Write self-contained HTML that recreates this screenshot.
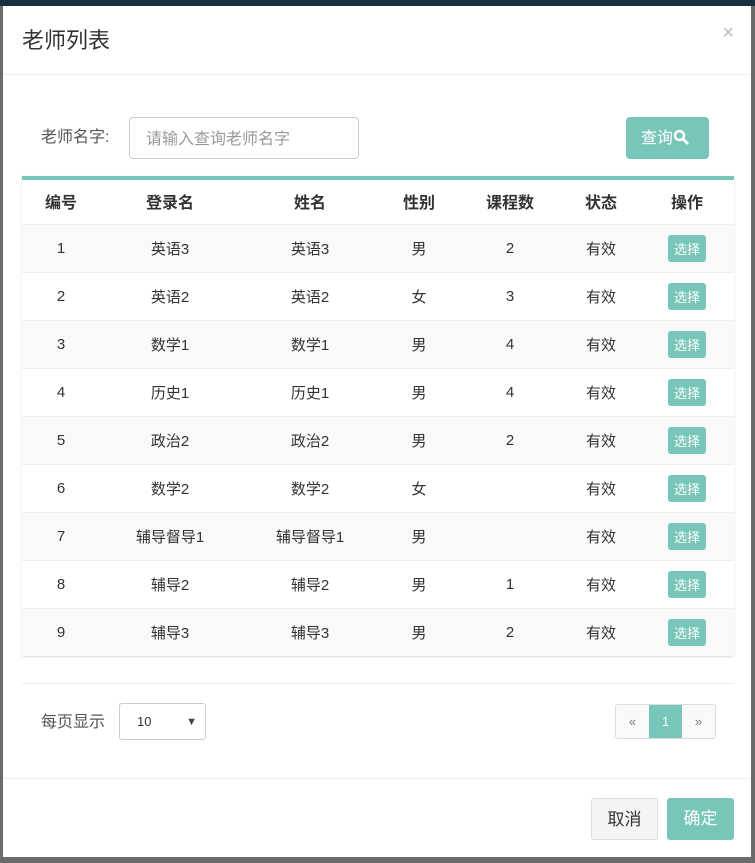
<!DOCTYPE html><html><head><meta charset="utf-8"><style>
*{box-sizing:border-box;margin:0;padding:0}
body{width:755px;height:863px;background:#6b6b6b;position:relative;overflow:hidden;font-family:"Liberation Sans","Noto Sans CJK SC",sans-serif;color:#333}
.top{position:absolute;left:0;top:0;width:755px;height:6px;background:#17303f}
.m{position:absolute;left:3px;top:6px;width:748px;height:851px;background:#fff}
.t{position:absolute;left:19px;top:17px;font-size:22px;color:#333}
.x{position:absolute;right:17px;top:16px;font-size:20px;color:#bbb}
.hr{position:absolute;height:1px;background:#eee}
.lab{position:absolute;left:38px;top:117px;font-size:16px;color:#555}
.inp{position:absolute;left:126px;top:111px;width:230px;height:42px;border:1px solid #ccc;border-radius:4px;font-size:16px;color:#999;padding:7px 16px}
.q{position:absolute;left:623px;top:111px;width:83px;height:42px;background:#78c6b9;border-radius:4px;color:#fff;font-size:16px;padding:7px 0 0 15px}
table{position:absolute;left:19px;top:170px;width:712px;border-collapse:collapse;border-top:4px solid #78c6b9;box-shadow:0 1px 2px rgba(0,0,0,.15);border-radius:3px}
th{height:46px;font-size:16px;font-weight:bold;text-align:center;padding-bottom:2px}
td{height:48px;text-align:center;font-size:15px;border-top:1px solid #eee}
tr:nth-child(even) td{background:#f9f9f9}
.b{display:inline-block;background:#78c6b9;color:#fff;font-size:13px;padding:4px 6px;border-radius:3px}
.sel{position:absolute;left:116px;top:697px;width:87px;height:37px;border:1px solid #ccc;border-radius:3px;font-size:13px;padding:10px 17px}
.pg{position:absolute;left:612px;top:698px;height:35px;border:1px solid #ddd;border-radius:3px;display:flex;font-size:13px;overflow:hidden}
.pg span{display:block;width:33px;text-align:center;line-height:33px;background:#f9f9f9;color:#777}
.btn{position:absolute;top:792px;height:42px;border-radius:3px;font-size:17px;padding:6px 0;text-align:center;width:67px}
</style></head><body>
<div class="top"></div>
<div class="m">
<div class="t">老师列表</div><div class="x">×</div>
<div class="hr" style="left:0;top:68px;width:748px"></div>
<div class="lab">老师名字:</div>
<div class="inp">请输入查询老师名字</div>
<div class="q">查询<svg width="16" height="16" viewBox="0 0 16 16" style="vertical-align:-2px"><circle cx="6.5" cy="6.5" r="4.5" fill="none" stroke="#fff" stroke-width="2.4"/><path d="M10 10l4 4" stroke="#fff" stroke-width="3" stroke-linecap="round"/></svg></div>
<table>
<tr><th style="width:78px">编号</th><th style="width:140px">登录名</th><th style="width:140px">姓名</th><th style="width:78px">性别</th><th style="width:104px">课程数</th><th style="width:78px">状态</th><th>操作</th></tr>
<tr><td>1</td><td>英语3</td><td>英语3</td><td>男</td><td>2</td><td>有效</td><td><span class="b">选择</span></td></tr>
<tr><td>2</td><td>英语2</td><td>英语2</td><td>女</td><td>3</td><td>有效</td><td><span class="b">选择</span></td></tr>
<tr><td>3</td><td>数学1</td><td>数学1</td><td>男</td><td>4</td><td>有效</td><td><span class="b">选择</span></td></tr>
<tr><td>4</td><td>历史1</td><td>历史1</td><td>男</td><td>4</td><td>有效</td><td><span class="b">选择</span></td></tr>
<tr><td>5</td><td>政治2</td><td>政治2</td><td>男</td><td>2</td><td>有效</td><td><span class="b">选择</span></td></tr>
<tr><td>6</td><td>数学2</td><td>数学2</td><td>女</td><td></td><td>有效</td><td><span class="b">选择</span></td></tr>
<tr><td>7</td><td>辅导督导1</td><td>辅导督导1</td><td>男</td><td></td><td>有效</td><td><span class="b">选择</span></td></tr>
<tr><td>8</td><td>辅导2</td><td>辅导2</td><td>男</td><td>1</td><td>有效</td><td><span class="b">选择</span></td></tr>
<tr><td>9</td><td>辅导3</td><td>辅导3</td><td>男</td><td>2</td><td>有效</td><td><span class="b">选择</span></td></tr>
</table>
<div class="hr" style="left:19px;top:677px;width:712px"></div>
<div class="lab" style="top:702px">每页显示</div>
<div class="sel">10<span style="position:absolute;right:8px;top:12px;font-size:11px;color:#444">▼</span></div>
<div class="pg"><span>«</span><span style="background:#78c6b9;color:#fff">1</span><span>»</span></div>
<div class="hr" style="left:0;top:772px;width:748px"></div>
<div class="btn" style="left:588px;background:#f4f4f4;border:1px solid #ddd;color:#333">取消</div>
<div class="btn" style="left:664px;background:#78c6b9;color:#fff">确定</div>
</div>
</body></html>
